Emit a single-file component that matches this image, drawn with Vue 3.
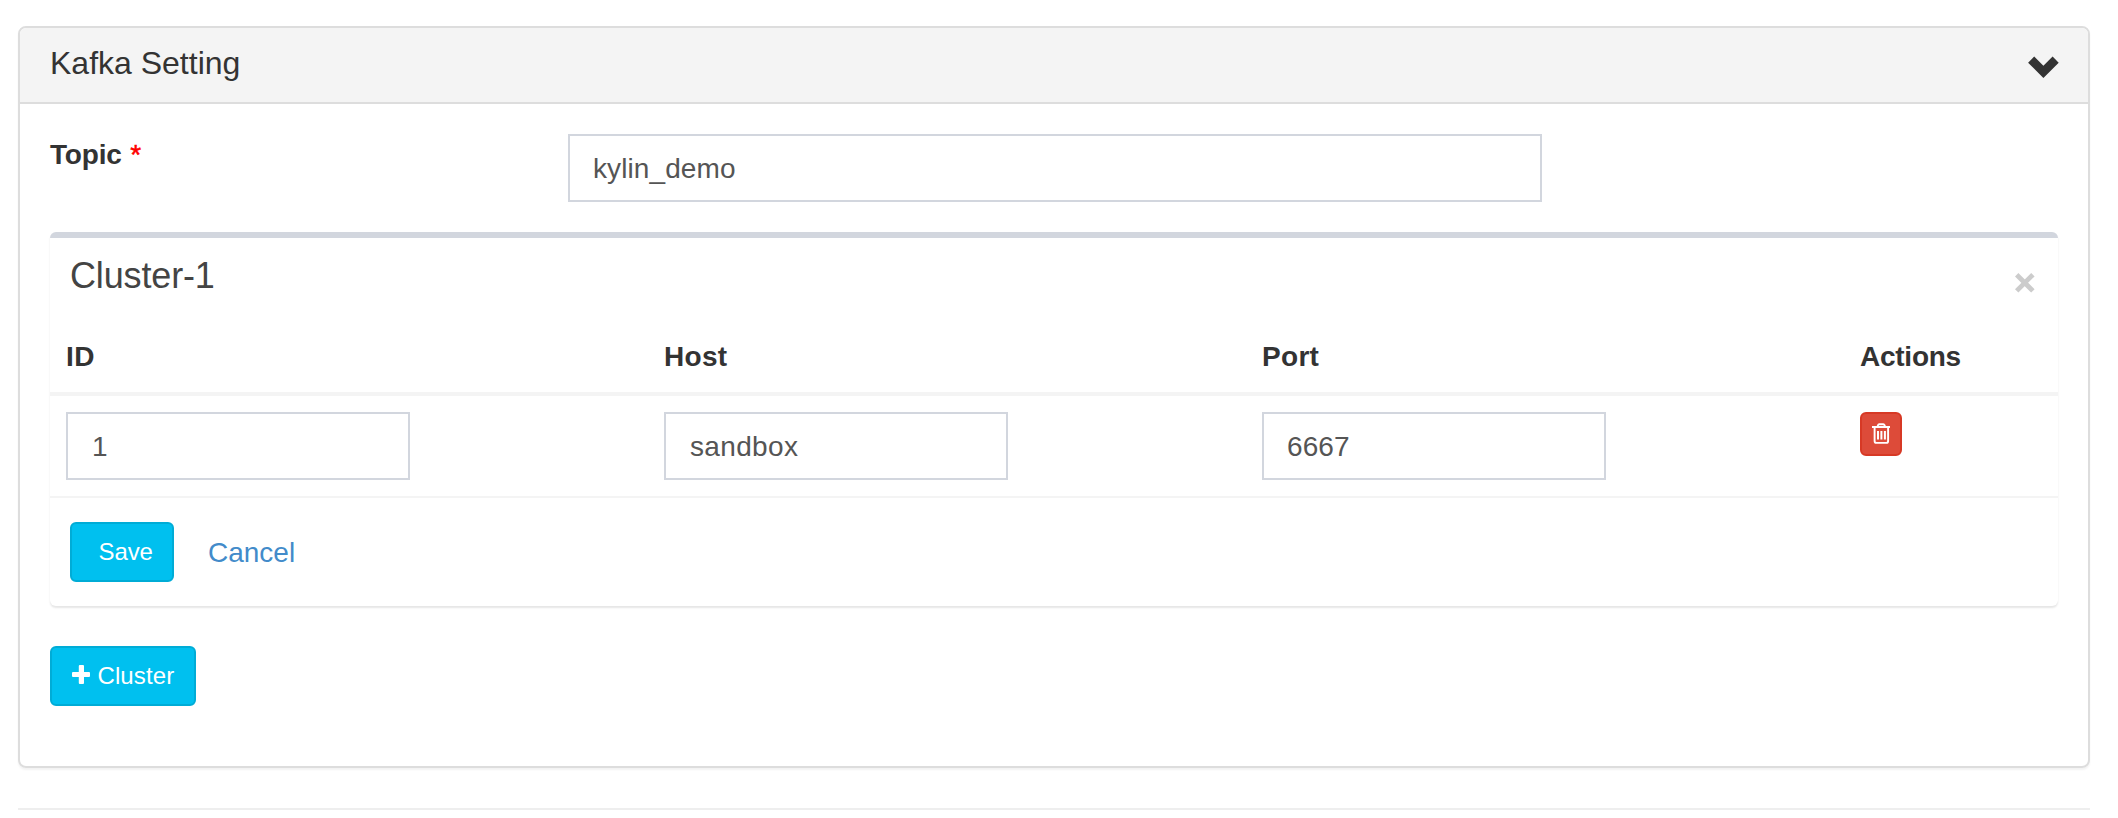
<script setup>
import { ref } from 'vue'

const topic = ref('kylin_demo')
const server = ref({ id: '1', host: 'sandbox', port: '6667' })
</script>

<template>
  <main class="page">
    <section class="panel">
      <header class="panel-head">
        <h3 class="panel-title">Kafka Setting</h3>
        <svg class="chevron" viewBox="0 0 31 22"><path d="M6.2 .6 15.4 9.8 24.6 .6 30.7 6.7 15.4 22 .1 6.7z" fill="#333" /></svg>
      </header>
      <div class="panel-body">
        <div class="topic-row">
          <label class="topic-label">Topic <span class="required">*</span></label>
          <input v-model="topic" class="field topic" />
        </div>

        <section class="box">
          <header class="box-head">
            <h3 class="box-title">Cluster-1</h3>
            <svg class="remove" viewBox="0 0 20 20"><path d="M3.4 3.4 16.200 16.200M16.200 3.400 3.400 16.200" stroke="#ccc" stroke-width="4.800" stroke-linecap="square" fill="none" /></svg>
          </header>
          <div class="row head">
            <div class="cell th id">ID</div>
            <div class="cell th">Host</div>
            <div class="cell th">Port</div>
            <div class="cell th actions">Actions</div>
          </div>
          <div class="row body">
            <div class="cell"><input v-model="server.id" class="field num" /></div>
            <div class="cell"><input v-model="server.host" class="field host" /></div>
            <div class="cell"><input v-model="server.port" class="field port" /></div>
            <div class="cell">
              <button class="delete" aria-label="Delete">
                <svg width="18" height="22" viewBox="0 0 18 22" fill="none" stroke="#fff">
                  <path d="M0 4H18" stroke-width="2" />
                  <path d="M5.400 4 6 2.200Q6.300 1.300 7.200 1.300H11.300Q12.200 1.300 12.500 2.200L13.200 4" stroke-width="1.900" />
                  <path d="M2.600 4.500V18Q2.600 19.900 4.400 19.900H14.300Q16.100 19.900 16.100 18V4.500" stroke-width="1.900" />
                  <path d="M6 8V16.500M9.400 8V16.500M12.900 8V16.500" stroke-width="2" />
                </svg>
              </button>
            </div>
          </div>
          <footer class="box-foot">
            <button class="btn save">Save</button>
            <a class="cancel">Cancel</a>
          </footer>
        </section>

        <button class="btn add">
          <svg width="18" height="19" viewBox="0 0 18 19" fill="#fff"><rect x="6.800" y="0" width="5.200" height="19" rx="1" /><rect x="0" y="6.900" width="18" height="5.200" rx="1" /></svg>
          <span>Cluster</span>
        </button>
      </div>
    </section>
    <hr class="rule" />
  </main>
</template>

<style>
body {
  margin: 0;
  background: #fff;
}
</style>

<style scoped>
.page,
.page * {
  box-sizing: border-box;
}
.page {
  height: 818px;
  padding: 26px 28px 0 18px;
  overflow: hidden;
  color: #333;
  font-family: "Liberation Sans", Arial, sans-serif;
  font-size: 28px;
  line-height: 40px;
}
.panel {
  height: 742px;
  border: 2px solid #ddd;
  border-radius: 8px;
  box-shadow: 0 2px 2px rgba(0, 0, 0, 0.05);
}
.panel-head {
  display: flex;
  justify-content: space-between;
  align-items: flex-start;
  height: 76px;
  padding: 17px 29px 0 30px;
  border-bottom: 2px solid #ddd;
  border-radius: 6px 6px 0 0;
  background: #f4f4f4;
}
.panel-title {
  margin: 0;
  font-size: 32px;
  font-weight: 400;
  line-height: 36px;
}
.chevron {
  width: 31px;
  height: 22px;
  margin-top: 11px;
}
.panel-body {
  padding: 30px;
}
.topic-row {
  display: flex;
  align-items: flex-start;
}
.topic-label {
  width: 518px;
  padding-top: 1px;
  font-weight: 700;
  letter-spacing: -0.2px;
}
.required {
  margin-left: 1px;
  color: #f00;
  font-weight: 400;
  -webkit-text-stroke: 0.5px #f00;
}
.field {
  display: block;
  width: 344px;
  height: 68px;
  padding: 2px 23px 0;
  border: 2px solid #d2d6de;
  border-radius: 0;
  outline: none;
  background: #fff;
  color: #555;
  font: inherit;
}
.topic {
  width: 974px;
  letter-spacing: 0.1px;
}
.num {
  padding-left: 24px;
}
.host {
  padding-left: 24px;
  letter-spacing: 0.35px;
}
.port {
  letter-spacing: 0.1px;
}
.box {
  height: 374px;
  margin-top: 30px;
  border-top: 6px solid #d2d6de;
  border-radius: 6px;
  box-shadow: 0 2px 2px rgba(0, 0, 0, 0.1);
}
.box-head {
  display: flex;
  justify-content: space-between;
  height: 82px;
  padding: 17px 23px 0 20px;
  color: #444;
}
.box-title {
  margin: 0;
  font-size: 36px;
  font-weight: 400;
  line-height: 41px;
  letter-spacing: -0.15px;
}
.remove {
  width: 20px;
  height: 20px;
  margin-top: 18px;
}
.row {
  display: grid;
  grid-template-columns: 598px 598px 598px 1fr;
}
.cell {
  padding: 0 16px;
}
.head {
  height: 76px;
  padding-top: 17px;
  border-bottom: 4px solid #f4f4f4;
}
.th {
  font-weight: 700;
  letter-spacing: 0.3px;
}
.id {
  letter-spacing: 0.5px;
}
.actions {
  letter-spacing: -0.25px;
}
.body {
  height: 102px;
  padding-top: 16px;
  border-bottom: 2px solid #f4f4f4;
}
button {
  margin: 0;
  padding: 0;
  font-family: inherit;
}
.delete {
  display: flex;
  align-items: flex-start;
  justify-content: center;
  width: 42px;
  height: 44px;
  padding-top: 9px;
  border: 2px solid #d73925;
  border-radius: 6px;
  background: #dd4b39;
}
.box-foot {
  display: flex;
  align-items: center;
  height: 108px;
  padding: 0 20px;
}
.btn {
  display: flex;
  align-items: center;
  height: 60px;
  border: 2px solid #00acd6;
  border-radius: 6px;
  background: #00c0ef;
  color: #fff;
  font-size: 24px;
  line-height: 36px;
}
.save {
  width: 104px;
  padding-left: 26.500px;
  letter-spacing: -0.1px;
}
.cancel {
  padding-top: 2px;
  margin-left: 34px;
  color: #428bca;
}
.add {
  width: 146px;
  gap: 7.500px;
  margin-top: 40px;
  padding-left: 20px;
  letter-spacing: 0.1px;
}
.add svg {
  margin-top: -3px;
}
.rule {
  height: 2px;
  margin: 40px 0 0;
  border: 0;
  background: #eee;
}
</style>
